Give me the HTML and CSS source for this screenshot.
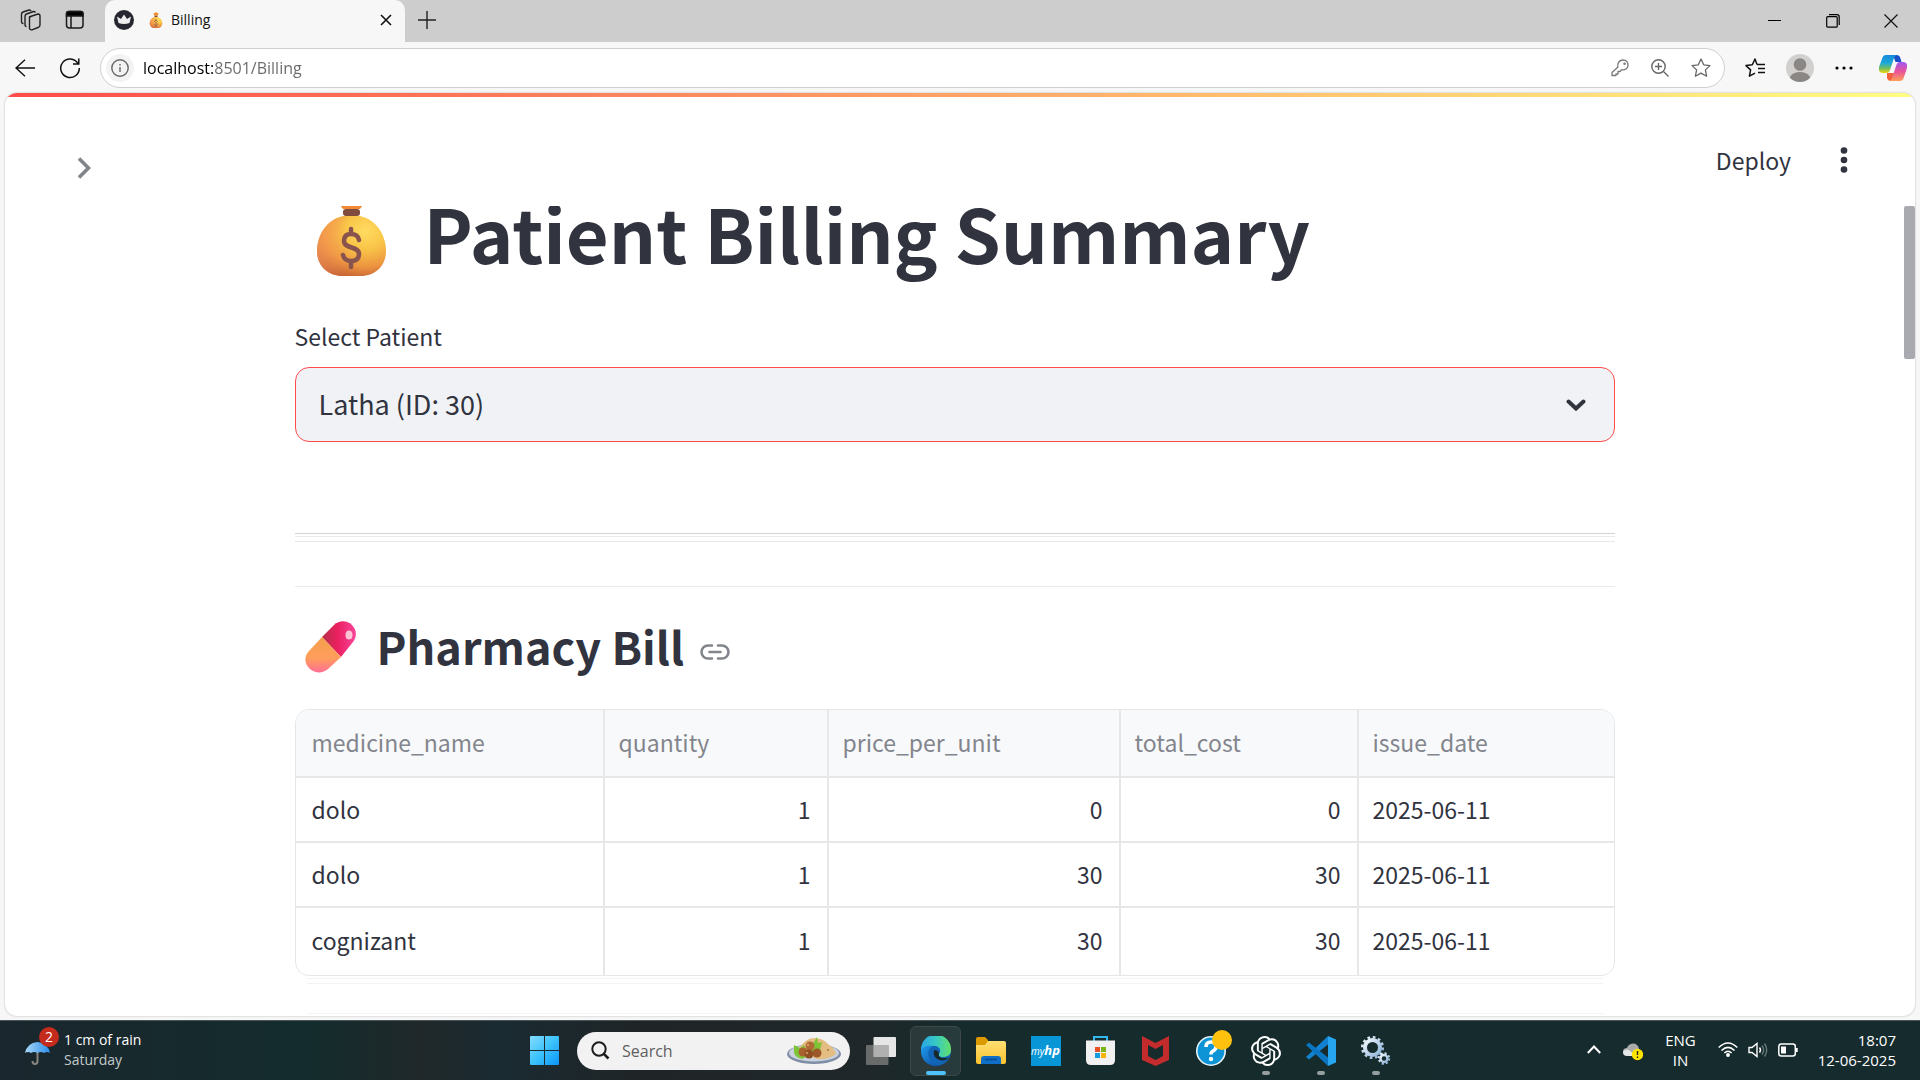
FILE: index.html
```html
<!DOCTYPE html>
<html lang="en">
<head>
<meta charset="utf-8">
<title>Billing</title>
<link rel="stylesheet" href="styles.css">
</head>
<body>
<svg class="defs" width="0" height="0" aria-hidden="true">
  <defs>
    <radialGradient id="bagFill" cx="0.7" cy="0.25" r="0.85">
      <stop offset="0" stop-color="#ffdc62"/><stop offset="0.35" stop-color="#f9c548"/><stop offset="0.7" stop-color="#ec9540"/><stop offset="1" stop-color="#bd5532"/>
    </radialGradient>
    <linearGradient id="bagSide" x1="0" x2="1"><stop offset="0" stop-color="#ffa45c"/><stop offset="0.45" stop-color="#ffa45c" stop-opacity="0"/></linearGradient>
    <linearGradient id="pillTop" x1="0" x2="1"><stop offset="0" stop-color="#b63149"/><stop offset="0.45" stop-color="#ea1f5f"/><stop offset="1" stop-color="#f8459a"/></linearGradient>
    <linearGradient id="pillBottom" x1="0" y1="0" x2="0" y2="1"><stop offset="0" stop-color="#f3a04b"/><stop offset="0.6" stop-color="#ff9d5c"/><stop offset="1" stop-color="#ff6f93"/></linearGradient>
    <linearGradient id="winFill" x1="0" y1="0" x2="1" y2="1"><stop offset="0" stop-color="#84dcff"/><stop offset="0.5" stop-color="#3cc2fc"/><stop offset="1" stop-color="#0a95f7"/></linearGradient>
    <linearGradient id="edgeTop" x1="0" x2="1"><stop offset="0" stop-color="#2aa5e4"/><stop offset="0.5" stop-color="#37c9c5"/><stop offset="1" stop-color="#62e06a"/></linearGradient>
    <linearGradient id="edgeLow" x1="0" y1="0" x2="1" y2="1"><stop offset="0" stop-color="#1d9bea"/><stop offset="1" stop-color="#0c4fa5"/></linearGradient>
    <linearGradient id="folder" x1="0" y1="0" x2="0" y2="1"><stop offset="0" stop-color="#ffdf74"/><stop offset="1" stop-color="#fcc32d"/></linearGradient>
    <linearGradient id="copA" x1="0" y1="0" x2="0" y2="1"><stop offset="0" stop-color="#1389dd"/><stop offset="0.45" stop-color="#1ba8d8"/><stop offset="0.75" stop-color="#76c05b"/><stop offset="1" stop-color="#f4d50b"/></linearGradient>
    <linearGradient id="copB" x1="0" y1="0" x2="0" y2="1"><stop offset="0" stop-color="#a257ef"/><stop offset="0.5" stop-color="#e9549b"/><stop offset="1" stop-color="#ffa057"/></linearGradient>
    <linearGradient id="umb" x1="0" x2="1"><stop offset="0" stop-color="#a9d8fb"/><stop offset="1" stop-color="#2b8de8"/></linearGradient>
    <linearGradient id="gear" x1="0" y1="0" x2="1" y2="1"><stop offset="0" stop-color="#f2f8fc"/><stop offset="1" stop-color="#8fb4dc"/></linearGradient>
    <symbol id="bag" viewBox="0 -8 69 88">
      <path d="M20-2q6 3 8-2 6-6 13 0 2 5 8 2-1 9-6 15H26q-5-6-6-15z" fill="#f08a32"/>
      <path d="M26 20C8 24 0 41 0 55c0 15 11 25 25 25h19c14 0 25-10 25-25 0-14-8-31-26-35z" fill="url(#bagFill)"/>
      <path d="M26 20C8 24 0 41 0 55c0 15 11 25 25 25h19c14 0 25-10 25-25 0-14-8-31-26-35z" fill="url(#bagSide)" opacity=".6"/>
      <rect x="26" y="13" width="17" height="7" rx="3" fill="#804b3c"/>
      <path d="M42 44c-1-5-4-6-8-6s-7 2-7 7c0 8 15 5 15 13 0 5-3 7-8 7-4 0-7-2-8-6M34 33v5M34 65v6" fill="none" stroke="#89534e" stroke-width="4.500" stroke-linecap="round"/>
    </symbol>
  </defs>
</svg>

<header class="tabstrip">
  <div class="strip-tools">
    <button class="icon-btn" aria-label="Workspaces"><svg width="22" height="22" viewBox="0 0 22 22" fill="none" stroke="#222" stroke-width="1.4"><path d="M9 8l9-3q2 0 2 2v9q0 2-2 2.500l-6 2.300q-2 .5-2.500-1.500V9.500Q9 8.500 11 7.500" stroke-linejoin="round"/><path d="M6.500 17.500q-1.500 0-1.500-2V7.500q0-2 1.500-2.500l7-2.500q1.500-.3 2 1M3.500 14.500q-2 0-2-2V5.500q0-2 1.500-2.500l6-2q1.500-.3 2 1"/></svg></button>
    <button class="icon-btn" aria-label="Tab actions"><svg width="20" height="20" viewBox="0 0 20 20" fill="none" stroke="#1a1a1a" stroke-width="1.500"><rect x="1.500" y="1.500" width="16.500" height="16.500" rx="3"/><path d="M1.500 6V3.500q0-2 2-2H16q2 0 2 2V6z" fill="#000"/><path d="M6 6v12"/></svg></button>
  </div>
  <div class="tab">
    <svg width="20" height="20" viewBox="0 0 20 20"><circle cx="10" cy="10" r="10" fill="#262730"/><path d="M3 6.500l4 2.500 3-4.500 3 4.500 4-2.500-1.500 6.500q-5.500 2-11 0z" fill="#eee"/></svg>
    <svg class="tab-bag" width="14" height="16"><use href="#bag"/></svg>
    <span class="tab-title">Billing</span>
    <button class="icon-btn" aria-label="Close tab"><svg width="12" height="12" viewBox="0 0 12 12" stroke="#111" stroke-width="1.600"><path d="M1 1l10 10M11 1L1 11"/></svg></button>
  </div>
  <button class="icon-btn new-tab" aria-label="New tab"><svg width="18" height="18" viewBox="0 0 18 18" stroke="#222" stroke-width="1.400"><path d="M9 0v18M0 9h18"/></svg></button>
  <div class="window-controls">
    <button class="icon-btn" aria-label="Minimize"><svg width="14" height="14" viewBox="0 0 14 14" stroke="#000"><path d="M0 6.500h13"/></svg></button>
    <button class="icon-btn" aria-label="Restore"><svg width="14" height="14" viewBox="0 0 14 14" fill="none" stroke="#000" stroke-width="1.200"><rect x=".7" y="2.700" width="10.500" height="10.500" rx="1"/><path d="M3 .7h8q2.200 0 2.200 2.200V11"/></svg></button>
    <button class="icon-btn" aria-label="Close"><svg width="14" height="14" viewBox="0 0 14 14" stroke="#111" stroke-width="1.200"><path d="M.5.5l13 13M13.500.5l-13 13"/></svg></button>
  </div>
</header>

<nav class="toolbar">
  <button class="icon-btn" aria-label="Back"><svg width="20" height="18" viewBox="0 0 20 18" fill="none" stroke="#111" stroke-width="1.400"><path d="M20 9H1M10 .8L1 9l9 8.200"/></svg></button>
  <button class="icon-btn" aria-label="Refresh"><svg width="22" height="22" viewBox="0 0 22 22" fill="none" stroke="#111" stroke-width="1.500"><path d="M19 6.500A9.300 9.300 0 1 0 20.300 11M19.800 1.500v5.500H14"/></svg></button>
  <div class="address">
    <button class="icon-btn site-info" aria-label="Site information"><svg width="18" height="18" viewBox="0 0 18 18" fill="none" stroke="#666" stroke-width="1.400"><circle cx="9" cy="9" r="8.200"/><path d="M9 8v5M9 5v1.500"/></svg></button>
    <input class="url" type="text" aria-label="Address" value="localhost:8501/Billing">
    <button class="icon-btn" aria-label="Passwords"><svg width="18" height="18" viewBox="0 0 18 18" fill="none" stroke="#777" stroke-width="1.300"><path d="M7 8C6 4 8.500 1 12 1s5.200 2.500 5 5.500-3 5-6.500 4.300L9 12.500H7V15H5v1.500H1V13.500z" stroke-linejoin="round"/><circle cx="13.500" cy="4.700" r=".6"/></svg></button>
    <button class="icon-btn" aria-label="Zoom"><svg width="18" height="18" viewBox="0 0 18 18" fill="none" stroke="#666" stroke-width="1.400"><circle cx="7.500" cy="7.500" r="6.700"/><path d="M12.500 12.500l5 5M4 7.500h7M7.500 4v7"/></svg></button>
    <button class="icon-btn" aria-label="Favorite"><svg width="20" height="20" viewBox="0 0 20 20" fill="none" stroke="#666" stroke-width="1.300" stroke-linejoin="round"><path d="M10 1l2.700 5.800 6.300.8-4.600 4.300 1.200 6.300L10 15.100l-5.600 3.100 1.200-6.300L1 7.600l6.300-.8z"/></svg></button>
  </div>
  <div class="browser-actions">
    <button class="icon-btn" aria-label="Favorites list"><svg width="20" height="20" viewBox="0 0 20 20" fill="none" stroke="#111" stroke-width="1.500" stroke-linejoin="round"><path d="M12 6.500L10 1 7.300 6.800 1 7.600l4.600 4.300-1.200 6.300 5.600-3.100M12 6.500h8M13 10.500h7M13 14.500h7"/></svg></button>
    <button class="icon-btn" aria-label="Profile"><svg width="28" height="28" viewBox="0 0 28 28"><clipPath id="avatar"><circle cx="14" cy="14" r="14"/></clipPath><g clip-path="url(#avatar)"><path fill="#d2d0ce" d="M0 0h28v28H0z"/><circle cx="14" cy="10.500" r="6.300" fill="#8a8784"/><ellipse cx="14" cy="25" rx="10.500" ry="7" fill="#8a8784"/></g></svg></button>
    <button class="icon-btn" aria-label="Settings and more"><svg width="18" height="4" viewBox="0 0 18 4"><circle cx="2" cy="2" r="1.600"/><circle cx="9" cy="2" r="1.600"/><circle cx="16" cy="2" r="1.600"/></svg></button>
    <button class="icon-btn copilot" aria-label="Copilot"><svg width="28" height="26" viewBox="0 0 28 26"><path d="M14 0h4q2.500 0 3.200 2.500L22.500 7h-6z" fill="#174fc6"/><path d="M8 18h7l-1 8h-2q-3 0-4-3z" fill="#f2613a"/><path d="M7 0h11q-2 0-3 3l-4 12q-1 3-4 3H4q-5 0-4-6L3 4q1-4 4-4z" fill="url(#copA)"/><path d="M21 26H10q2 0 3-3l4-12q1-4 4-4h3q5 0 4 6l-3 9q-1 4-4 4z" fill="url(#copB)"/></svg></button>
  </div>
</nav>

<main class="viewport">
  <div class="decoration"></div>
  <header class="app-header">
    <button class="icon-btn expand" aria-label="Open sidebar"><svg width="14" height="22" viewBox="0 0 14 22" fill="none" stroke="#83858d" stroke-width="3.600"><path d="M2 1.500l9.500 9.500L2 20.500"/></svg></button>
    <button class="deploy">Deploy</button>
    <button class="icon-btn kebab" aria-label="Main menu"><svg width="8" height="26" viewBox="0 0 8 26" fill="#31333f"><circle cx="4" cy="3.500" r="3.300"/><circle cx="4" cy="13" r="3.300"/><circle cx="4" cy="22.500" r="3.300"/></svg></button>
  </header>
  <div class="scroller">
    <div class="content">
      <h1><svg width="69" height="88" aria-hidden="true"><use href="#bag"/></svg>Patient Billing Summary</h1>
      <label for="patient">Select Patient</label>
      <div class="select-wrap">
        <select id="patient"><option>Latha (ID: 30)</option></select>
        <svg class="chevron" width="20" height="12" viewBox="0 0 20 12" fill="none" stroke="#31333f" stroke-width="4" stroke-linecap="round"><path d="M2.500 2.500L10 9.500l7.500-7"/></svg>
      </div>
      <div class="dividers"><hr class="strong"><hr><hr><hr></div>
      <h2><svg width="52" height="54" viewBox="0 -2 52 54" aria-hidden="true"><path d="M17 16L29 4c5-5 13-5 18 0s5 12 1 17L36 36z" fill="url(#pillTop)"/><path d="M17 16L36 36 23 48c-6 5-13 4-18 0-6-5-6-13-1-18z" fill="url(#pillBottom)"/><ellipse cx="44" cy="14" rx="3.500" ry="4.500" fill="#ffc3d8"/></svg>Pharmacy Bill
        <a class="anchor" href="#patient" aria-label="Link to heading"><svg width="30" height="16" viewBox="0 0 30 16" fill="none" stroke="#83858d" stroke-width="2.600" stroke-linecap="round"><path d="M12 1.500H8a6.500 6.500 0 0 0 0 13h4M18 1.500h4a6.500 6.500 0 0 1 0 13h-4M9.500 8h11"/></svg></a></h2>
      <div class="table-frame">
        <table>
          <colgroup><col class="c1"><col class="c2"><col class="c3"><col class="c4"><col></colgroup>
          <thead><tr><th>medicine_name</th><th>quantity</th><th>price_per_unit</th><th>total_cost</th><th>issue_date</th></tr></thead>
          <tbody>
            <tr><td>dolo</td><td class="num">1</td><td class="num">0</td><td class="num">0</td><td>2025-06-11</td></tr>
            <tr><td>dolo</td><td class="num">1</td><td class="num">30</td><td class="num">30</td><td>2025-06-11</td></tr>
            <tr><td>cognizant</td><td class="num">1</td><td class="num">30</td><td class="num">30</td><td>2025-06-11</td></tr>
          </tbody>
        </table>
      </div>
      <div class="faded"><hr><hr><hr></div>
    </div>
    <div class="scrollbar"></div>
  </div>
</main>

<footer class="taskbar">
  <button class="weather">
    <span class="umbrella"><svg width="26" height="26" viewBox="0 0 26 26"><path d="M12.500 10v11q0 3-2.500 3t-2.500-3" fill="none" stroke="#8a8480" stroke-width="2"/><path d="M0 13Q2 3 12.500 2 23 3 25 13q-3-2-6 0-3-2-6.500 0-3.500-2-6.500 0-3-2-6 0z" fill="url(#umb)"/></svg><span class="badge">2</span></span>
    <span class="weather-text"><span>1 cm of rain</span><span class="day">Saturday</span></span>
  </button>
  <div class="apps">
    <button class="app" aria-label="Start"><svg width="30" height="30" viewBox="0 0 30 30"><path fill="url(#winFill)" d="M1 0h13v14H0V1q0-1 1-1zM15 0h13q1 0 1 1v13H15zM0 15h14v14H1q-1 0-1-1zM15 15h14v13q0 1-1 1H15z"/></svg></button>
    <div class="search">
      <svg width="19" height="19" viewBox="0 0 19 19" fill="none" stroke="#1c1c1c" stroke-width="2"><circle cx="8" cy="8" r="6.700"/><path d="M12.800 12.800l4.700 4.700" stroke-width="2.600"/></svg>
      <input type="text" placeholder="Search" aria-label="Search">
      <svg width="54" height="28" viewBox="0 0 54 28"><ellipse cx="27" cy="17" rx="27" ry="10" fill="#7f8ea5"/><ellipse cx="27" cy="16" rx="25" ry="8.500" fill="#c9d2de"/><path d="M10 14Q18 1 27 1t14 6q7 5 8 10-7 6-19 5z" fill="#e3bd82"/><path d="M7 8l6 3 4-3 2 5 8-8 3-5 1 6 4-1-2 8-18 9q-8-2-8-7z" fill="#7fc437"/><circle cx="16" cy="15" r="4.500" fill="#a8622e"/><circle cx="23" cy="9" r="4.500" fill="#b06a35"/><circle cx="22" cy="17" r="4.500" fill="#8f4f22"/><circle cx="30" cy="16" r="4.500" fill="#9c5828"/><circle cx="21" cy="8" r="1.300" fill="#d79a63"/><circle cx="20" cy="16" r="1.300" fill="#cb8d58"/><circle cx="41" cy="13" r="1" fill="#a9793d"/></svg>
    </div>
    <button class="app" aria-label="Task view"><svg width="30" height="28" viewBox="0 0 30 28"><rect x="7.500" width="22.500" height="20" rx="1" fill="#e6e6e6"/><rect y="8" width="22.500" height="20" rx="1" fill="#777" opacity=".85"/><path d="M7.500 8h15v12h-15z" fill="#b0b0b0"/></svg></button>
    <button class="app active" aria-label="Microsoft Edge"><svg width="30" height="30" viewBox="0 0 30 30"><circle cx="15" cy="15" r="15" fill="#1264b6"/><path d="M0 13A15 15 0 0 1 30 14c0 5-4 7-8 7-3 0-5-1-4-3 3-4 0-8-5-8C7 10 3 12 0 16z" fill="url(#edgeTop)"/><path d="M0 15C1 11 6 9 12 10c-4 2-6 7-4 12 2 4 6 7 10 7.700A15 15 0 0 1 0 15z" fill="url(#edgeLow)"/><path d="M28.500 21.500q-5 4-10 2.500c-5-1.500-7-6-5-10 1.500 0 4 1 4.500 3-1 3 1 5 5 5q3 0 5.500-.5z" fill="#18292c"/></svg></button>
    <button class="app" aria-label="File Explorer"><svg width="30" height="28" viewBox="0 0 30 28"><path d="M0 2q0-2 2-2h7l3 3v6H0z" fill="#dd9a00"/><path d="M0 8h9l3-4h16q2 0 2 2v19q0 2-2 2H2q-2 0-2-2z" fill="url(#folder)"/><path d="M5 27v-5q0-3 3-3h14q3 0 3 3v5z" fill="#0f6fc6"/><path d="M9 22.500h12" stroke="#084a94" stroke-width="1.500"/></svg></button>
    <button class="app" aria-label="myHP"><span class="hp">my<b>hp</b></span></button>
    <button class="app" aria-label="Microsoft Store"><svg width="29" height="29" viewBox="0 0 29 29"><path d="M8 6V1h13v5" fill="none" stroke="#35b8ee" stroke-width="2"/><path d="M0 4.500h29V24q0 5-5 5H5q-5 0-5-5z" fill="#f1f1f1"/><path fill="#e8502a" d="M9 11h5v5H9z"/><path fill="#7cb518" d="M15 11h5v5h-5z"/><path fill="#189bda" d="M9 17h5v5H9z"/><path fill="#fbb40c" d="M15 17h5v5h-5z"/></svg></button>
    <button class="app" aria-label="McAfee"><svg width="27" height="30" viewBox="0 0 27 30"><path d="M0 0l13.500 7L27 0v24l-13.500 6L0 24zM6 9v11l7.500 4L21 20V9l-7.500 4z" fill="#c42b2c"/></svg></button>
    <button class="app" aria-label="HP Support Assistant"><svg width="30" height="30" viewBox="0 6 30 30" overflow="visible"><circle cx="15" cy="21" r="14.200" fill="#0c94d6" stroke="#e8f3f7" stroke-width="1.600"/><path d="M10 17q0-5 5-5t5 4.500q0 3-3 4.500-2 1-2 3.500" fill="none" stroke="#fff" stroke-width="3.600"/><circle cx="15" cy="29" r="2.200" fill="#fff"/><circle cx="26" cy="10" r="10" fill="#fdc10e"/></svg></button>
    <button class="app running" aria-label="ChatGPT"><svg width="30" height="30" viewBox="0 0 24 24" fill="#fff"><path d="M22.2819 9.8211a5.9847 5.9847 0 0 0-.5157-4.9108 6.0462 6.0462 0 0 0-6.5098-2.9A6.0651 6.0651 0 0 0 4.9807 4.1818a5.9847 5.9847 0 0 0-3.9977 2.9 6.0462 6.0462 0 0 0 .7427 7.0966 5.98 5.98 0 0 0 .511 4.9107 6.051 6.051 0 0 0 6.5146 2.9001A5.9847 5.9847 0 0 0 13.2599 24a6.0557 6.0557 0 0 0 5.7718-4.2058 5.9894 5.9894 0 0 0 3.9977-2.9001 6.0557 6.0557 0 0 0-.7475-7.0729zm-9.022 12.6081a4.4755 4.4755 0 0 1-2.8764-1.0408l.1419-.0804 4.7783-2.7582a.7948.7948 0 0 0 .3927-.6813v-6.7369l2.02 1.1686a.071.071 0 0 1 .038.052v5.5826a4.504 4.504 0 0 1-4.4945 4.4944zm-9.6607-4.1254a4.4708 4.4708 0 0 1-.5346-3.0137l.142.0852 4.783 2.7582a.7712.7712 0 0 0 .7806 0l5.8428-3.3685v2.3324a.0804.0804 0 0 1-.0332.0615L9.74 19.9502a4.4992 4.4992 0 0 1-6.1408-1.6464zM2.3408 7.8956a4.485 4.485 0 0 1 2.3655-1.9728V11.6a.7664.7664 0 0 0 .3879.6765l5.8144 3.3543-2.0201 1.1685a.0757.0757 0 0 1-.071 0l-4.8303-2.7865A4.504 4.504 0 0 1 2.3408 7.872zm16.5963 3.8558L13.1038 8.364 15.1192 7.2a.0757.0757 0 0 1 .071 0l4.8303 2.7913a4.4944 4.4944 0 0 1-.6765 8.1042v-5.6772a.79.79 0 0 0-.407-.667zm2.0107-3.0231l-.142-.0852-4.7735-2.7818a.7759.7759 0 0 0-.7854 0L9.409 9.2297V6.8974a.0662.0662 0 0 1 .0284-.0615l4.8303-2.7866a4.4992 4.4992 0 0 1 6.6802 4.66zM8.3065 12.863l-2.02-1.1638a.0804.0804 0 0 1-.038-.0567V6.0742a4.4992 4.4992 0 0 1 7.3757-3.4537l-.142.0805L8.704 5.459a.7948.7948 0 0 0-.3927.6813zm1.0976-2.3654l2.602-1.4998 2.6069 1.4998v2.9994l-2.5974 1.4997-2.6067-1.4997Z"/></svg></button>
    <button class="app running" aria-label="Visual Studio Code"><svg width="30" height="30" viewBox="0 0 30 30"><path d="M22 0l8 3.500v23L22 30z" fill="#27a5ee"/><path d="M22 0v8.500L3 23.500 0 21z" fill="#1281cf"/><path d="M22 30v-8.500L3 6.500 0 9z" fill="#0b75c2"/></svg></button>
    <button class="app running" aria-label="Services"><svg width="30" height="30" viewBox="0 0 30 30" fill="none" stroke="url(#gear)"><circle cx="11.500" cy="11.500" r="7.500" stroke-width="4"/><circle cx="11.500" cy="11.500" r="10.300" stroke-width="2.500" stroke-dasharray="2.700 2.690"/><circle cx="23" cy="22.500" r="3.500" stroke-width="2.400"/><circle cx="23" cy="22.500" r="5.300" stroke-width="1.800" stroke-dasharray="2.080 2.080"/></svg></button>
  </div>
  <div class="tray">
    <button class="icon-btn" aria-label="Show hidden icons"><svg width="14" height="9" viewBox="0 0 14 9" fill="none" stroke="#fff" stroke-width="2"><path d="M.8 8L7 1.500 13.200 8"/></svg></button>
    <button class="icon-btn cloud" aria-label="OneDrive"><svg width="20" height="18" viewBox="0 0 20 18"><path d="M4 12q-4 0-4-3.500T4 5q1-4 6-4.500 5 0 6 5.500v6z" fill="#a9abab"/><path d="M4 13q-4 0-4-4 1-3 5-2.500l9 6.500z" fill="#e5e6e6"/><circle cx="14.500" cy="11.500" r="5.700" fill="#ffe400"/><path d="M14.500 8v4M14.500 13.500v1.500" stroke="#222" stroke-width="1.400"/></svg></button>
    <button class="lang"><span>ENG</span><span>IN</span></button>
    <button class="status" aria-label="Network, volume, battery">
      <svg width="20" height="15" viewBox="0 0 20 15" fill="none" stroke="#fff" stroke-width="1.500"><path d="M.7 5.500q9.300-9 18.600 0M3.500 8.500q6.500-6.300 13 0M6.300 11q3.700-3.500 7.400 0"/><circle cx="10" cy="13" r="1.200" fill="#fff"/></svg>
      <svg width="20" height="16" viewBox="0 0 20 16" fill="none" stroke="#fff" stroke-width="1.400"><path d="M1 5.500h3L9 1.500v13l-5-4H1z"/><path d="M11.500 5.500q2 2.500 0 5"/><path d="M14 3.500q3.300 4.500 0 9M16.500 1.500q4.500 6.500 0 13" stroke="#64787a"/></svg>
      <svg width="20" height="14" viewBox="0 0 20 14" fill="none" stroke="#fff" stroke-width="1.500"><rect x=".8" y="1" width="16.500" height="12" rx="2.500"/><path d="M3 3.500h5v7H3z" fill="#fff" stroke="none"/><path d="M18.700 5v4" stroke-width="2"/></svg>
    </button>
    <button class="clock"><span>18:07</span><span>12-06-2025</span></button>
  </div>
</footer>
</body>
</html>
```
FILE: styles.css
```css
* { box-sizing: border-box; }

:root {
  --ui: "Open Sans", "Noto Sans", sans-serif;
  --app: "Noto Sans CJK SC", "Noto Sans", sans-serif;
  --ink: #31333f;
  --line: #e6e7e9;
}

body {
  margin: 0;
  height: 100vh;
  display: flex;
  flex-direction: column;
  overflow: hidden;
  background: #f7f7f7;
  font-family: var(--ui);
}

button {
  border: 0;
  padding: 0;
  background: none;
  color: inherit;
  font: inherit;
}

svg { display: block; flex: none; }
.defs { position: absolute; }
.icon-btn { display: flex; align-items: center; justify-content: center; flex: none; }

/* Browser tab strip */
.tabstrip {
  display: flex;
  flex: none;
  height: 42px;
  background: #cdcdcd;
}
.strip-tools {
  display: flex;
  align-items: center;
  gap: 23px;
  width: 105px;
  padding: 0 0 2px 20px;
}
.tab {
  display: flex;
  align-items: center;
  width: 300px;
  padding: 0 13px 3px 9px;
  background: #f7f7f7;
  border-radius: 10px 10px 0 0;
}
.tab-bag { margin: 0 8px 0 15px; }
.tab-title { flex: 1; font-size: 14px; line-height: 20px; color: #111; }
.new-tab { width: 44px; padding-bottom: 3px; }
.window-controls { display: flex; margin-left: auto; }
.window-controls .icon-btn { width: 58px; }

/* Browser toolbar */
.toolbar {
  display: flex;
  flex: none;
  align-items: center;
  height: 51px;
  padding: 0 13px 0 15px;
  gap: 24px;
}
.address {
  display: flex;
  flex: 1;
  align-items: center;
  gap: 22px;
  height: 40px;
  margin-left: -5px;
  padding: 0 13px 0 5px;
  border: 1px solid #cfcfcf;
  border-radius: 20px;
  background: #fff;
}
.site-info { width: 28px; height: 28px; border-radius: 14px; background: #f3f3f3; }
.url {
  flex: 1;
  min-width: 0;
  margin-left: -13px;
  padding: 0;
  border: 0;
  outline: 0;
  font: 16px/28px var(--ui);
  background: linear-gradient(to right, #000 70px, #686868 70px);
  -webkit-background-clip: text;
  background-clip: text;
  color: transparent;
}
.browser-actions { display: flex; align-items: center; gap: 21px; margin-left: -4px; }
.copilot { margin-left: 5px; }

/* Page */
.viewport {
  display: flex;
  flex: 1;
  flex-direction: column;
  min-height: 0;
  margin: 0 5px 4px;
  overflow: hidden;
  border-radius: 12px;
  background: #fff;
  box-shadow: 0 0 2px #aaa;
  color: var(--ink);
  font-family: var(--app);
}
.decoration { flex: none; height: 4px; background: linear-gradient(to right, #ff4b4b, #fffd80); }
.app-header {
  display: flex;
  flex: none;
  align-items: center;
  height: 109px;
  padding: 17px 67px 0 72px;
}
.expand { margin-top: 16px; }
.deploy { margin-left: auto; font-size: 23px; line-height: 32px; }
.kebab { margin-left: 49px; }
.scroller { display: flex; flex: 1; min-height: 0; overflow: hidden; }
.content { width: 100%; max-width: 1320px; margin: 0 auto; }
.scrollbar { flex: none; width: 11px; height: 153px; background: #a9aab0; border-radius: 2px; }

h1, h2 { display: flex; align-items: center; margin: 0; }
h1 { gap: 38px; margin-top: -19px; padding-left: 22px; font-size: 74px; line-height: 90px; font-weight: 700; }
h2 { gap: 20px; margin: 29px 0 33px; padding-left: 10px; font-size: 45px; line-height: 60px; font-weight: 600; }
label { display: block; margin: 41px 0 13px; font-size: 23px; line-height: 36px; }
.select-wrap { display: grid; align-items: center; }
.select-wrap > * { grid-area: 1 / 1; }
select {
  appearance: none;
  width: 100%;
  height: 75px;
  padding: 0 23px 2px;
  border: 1px solid #ff4b4b;
  border-radius: 14px;
  outline: 0;
  background: #f0f2f6;
  color: var(--ink);
  font: 27px/36px var(--app);
}
.chevron { justify-self: end; margin-right: 29px; pointer-events: none; }

hr { height: 1px; margin: 0; border: 0; background: #eaeaeb; }
.dividers { padding-top: 91px; }
.dividers .strong { background: #d3d3d5; }
.dividers hr:nth-child(2) { margin-top: 2px; }
.dividers hr:nth-child(3) { margin-top: 4px; }
.dividers hr:nth-child(4) { margin-top: 44px; }

.anchor { margin: 12px 0 0 -4px; }
.table-frame { overflow: hidden; border: 1px solid var(--line); border-radius: 14px; }
table { width: 100%; table-layout: fixed; border-collapse: separate; border-spacing: 0; font-size: 23px; line-height: 32px; }
.c1 { width: 309px; }
.c2 { width: 224px; }
.c3 { width: 292px; }
.c4 { width: 238px; }
th, td { height: 65px; padding: 0 16px 2px 14px; border: 0 solid var(--line); border-width: 0 2px 2px 0; text-align: left; }
th { height: 68px; background: #f8f9fb; color: #83858d; font-weight: 400; }
th:first-child, td:first-child { padding-left: 16px; }
th:last-child, td:last-child { border-right-width: 0; }
tr:last-child td { height: 67px; padding-bottom: 4px; border-bottom-width: 0; }
thead tr:last-child th { border-bottom-width: 2px; }
.num { text-align: right; }
.faded { padding: 2px 12px 0; }
.faded hr { background: #f3f3f4; }
.faded hr:nth-child(2) { margin-top: 4px; }
.faded hr:nth-child(3) { margin-top: 29px; }

/* Taskbar */
.taskbar {
  display: grid;
  grid-template-columns: 1fr auto 1fr;
  flex: none;
  height: 60px;
  border-top: 1px solid #4a5658;
  background: linear-gradient(to right, #1a272e 0%, #142c2d 16%, #20282a 22%, #1a2b32 26%, #1f2527 33%, #20272a 45%, #152b2c 50%, #152b2d 100%);
  color: #fff;
  font-size: 14px;
  line-height: 20px;
}
.weather { display: flex; align-items: center; gap: 10px; padding: 0 0 2px 25px; text-align: left; }
.umbrella { position: relative; width: 29px; padding-top: 6px; }
.badge {
  position: absolute;
  top: -7px;
  left: 14px;
  width: 20px;
  height: 20px;
  border-radius: 10px;
  background: #c42b1c;
  text-align: center;
}
.weather-text, .lang, .clock { display: flex; flex-direction: column; justify-content: center; }
.day { color: #c3c9ca; }
.apps { display: flex; align-items: center; }
.app { display: flex; align-items: center; justify-content: center; position: relative; width: 55px; height: 52px; }
.app.active::before { content: ""; position: absolute; inset: 1px 2px; border: 1px solid #3c4947; border-radius: 6px; background: #ffffff14; }
.app > svg { position: relative; }
.app.active::after, .app.running::after {
  content: "";
  position: absolute;
  bottom: 2px;
  width: 8px;
  height: 4px;
  border-radius: 2px;
  background: #949e9e;
}
.app.active::after { width: 20px; background: #4cc2ff; }
.search {
  display: flex;
  align-items: center;
  width: 273px;
  height: 38px;
  margin: 0 3px 0 5px;
  padding: 0 9px 0 14px;
  gap: 12px;
  border-radius: 19px;
  background: #f2f2f2;
}
.search input { flex: 1; min-width: 0; padding: 0; border: 0; outline: 0; background: none; font: 16px/24px var(--ui); }
.search input::placeholder { color: #606060; }
.hp {
  width: 30px;
  height: 30px;
  background: #0896d7;
  font-size: 10px;
  font-style: italic;
  line-height: 28px;
}
.hp b { font-size: 13px; }
.tray { display: flex; align-items: center; justify-content: flex-end; padding: 0 24px 2px 0; font-size: 15px; }
.cloud { margin: 4px 22px 0; }
.lang { align-items: center; }
.status { display: flex; align-items: center; gap: 10px; margin: 0 20px 0 22px; }
.clock { align-items: flex-end; }
```
